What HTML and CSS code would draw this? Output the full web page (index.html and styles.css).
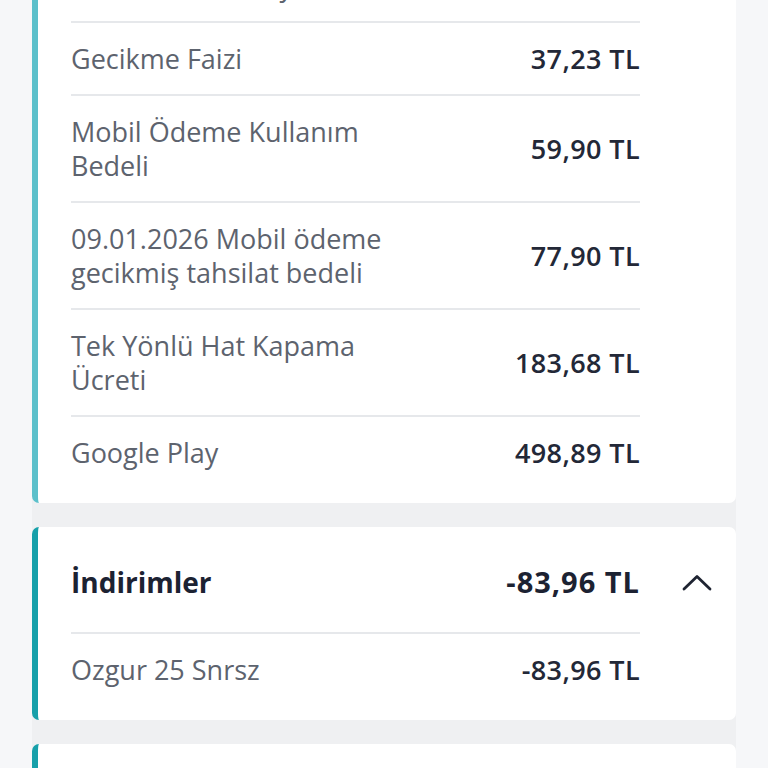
FILE: index.html
```html
<!DOCTYPE html>
<html>
	<head>
		<meta charset="utf-8">
		<link rel="stylesheet" href="styles.css">
	</head>
	<body>
		<div class="list">
			<div class="card card-light">
				<div class="card-rows">
					<div class="row">
						<div class="row-label">Servis Hizmet Payı</div>
						<div class="row-value">24,00 TL</div>
					</div>
					<div class="row">
						<div class="row-label">Gecikme Faizi</div>
						<div class="row-value">37,23 TL</div>
					</div>
					<div class="row">
						<div class="row-label">Mobil Ödeme Kullanım Bedeli</div>
						<div class="row-value">59,90 TL</div>
					</div>
					<div class="row">
						<div class="row-label">09.01.2026 Mobil ödeme gecikmiş tahsilat bedeli</div>
						<div class="row-value">77,90 TL</div>
					</div>
					<div class="row">
						<div class="row-label">Tek Yönlü Hat Kapama Ücreti</div>
						<div class="row-value">183,68 TL</div>
					</div>
					<div class="row row-last">
						<div class="row-label">Google Play</div>
						<div class="row-value">498,89 TL</div>
					</div>
				</div>
			</div>
			<div class="card card-dark">
				<div class="card-header">
					<div class="card-header-main">
						<div class="card-title">İndirimler</div>
						<div class="card-total">-83,96 TL</div>
					</div>
					<div class="card-toggle">
						<svg width="30" height="17" viewBox="0 0 30 17">
							<path d="M2 15 L15 2.5 L28 15" fill="none" stroke="#1f2432" stroke-width="2.8" stroke-linecap="round" stroke-linejoin="round"/>
						</svg>
					</div>
				</div>
				<div class="card-rows">
					<div class="row row-last">
						<div class="row-label">Ozgur 25 Snrsz</div>
						<div class="row-value">-83,96 TL</div>
					</div>
				</div>
			</div>
			<div class="card card-dark card-next">
			</div>
		</div>
	</body>
</html>
```

FILE: styles.css
```css
body
{
	margin: 0;
	background-color: #f6f7f9;
	font-family: "Open Sans", "Noto Sans", sans-serif;
}
.list
{
	display: flex;
	flex-direction: column;
	gap: 24px;
	margin: -50px 32px 0 32px;
	background-color: #eff0f2;
}
.card
{
	background-color: #ffffff;
	border-left: 6px solid #5bbfca;
	border-radius: 7px;
	padding: 0 0 15px 33px;
}
.card-light
{
	border-left-color: #5cc0cb;
}
.card-dark
{
	border-left-color: #17a0aa;
}
.card-next
{
	height: 60px;
}
.card-rows
{
	margin-right: 96px;
}
.row
{
	display: flex;
	align-items: center;
	justify-content: space-between;
	padding: 18.5px 0;
	border-bottom: 2px solid #e6e8eb;
}
.row-last
{
	border-bottom: none;
}
.row-label
{
	width: 330px;
	font-size: 27px;
	line-height: 34px;
	color: #5d636e;
}
.row-value
{
	font-size: 27px;
	line-height: 34px;
	font-weight: 600;
	letter-spacing: 0.4px;
	color: #232837;
	white-space: nowrap;
}
.card-header
{
	display: flex;
}
.card-header-main
{
	flex: 1;
	display: flex;
	align-items: center;
	justify-content: space-between;
	padding: 38px 0 33px 0;
	border-bottom: 2px solid #e6e8eb;
}
.card-title
{
	font-size: 28px;
	line-height: 34px;
	font-weight: 700;
	color: #1c2232;
}
.card-total
{
	font-size: 29px;
	line-height: 34px;
	font-weight: 700;
	letter-spacing: 1px;
	color: #1c2232;
}
.card-toggle
{
	width: 96px;
	display: flex;
	align-items: center;
	justify-content: center;
	padding: 4px 0 0 18px;
	box-sizing: border-box;
}
```
